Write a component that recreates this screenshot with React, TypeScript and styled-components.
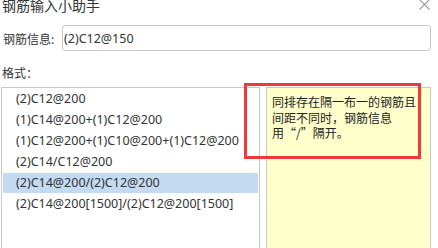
import React from "react";
import styled, { createGlobalStyle } from "styled-components";

const Global = createGlobalStyle`
  html, body {
    margin: 0;
    padding: 0;
    background: #ffffff;
    overflow: hidden;
  }
  body {
    font-family: "Noto Sans", "Noto Sans CJK SC", sans-serif;
    color: #333333;
  }
`;

const Dialog = styled.div`
  position: relative;
  width: 438px;
  height: 248px;
  overflow: hidden;
  background: #ffffff;
`;

const TitleBar = styled.div`
  display: flex;
  align-items: center;
  justify-content: space-between;
  height: 10px;
  padding: 0 8px 0 2px;
`;

const Title = styled.div`
  font-family: "Noto Sans CJK SC", sans-serif;
  font-size: 14px;
  line-height: 10px;
  color: #333333;
`;

const Close = styled.svg`
  width: 11px;
  height: 11px;
  margin-top: -2px;
`;

const FormRow = styled.div`
  display: flex;
  align-items: center;
  margin-top: 15px;
  padding: 0 7px 0 3px;
`;

const Label = styled.div`
  font-family: "Noto Sans CJK SC", sans-serif;
  font-size: 12px;
  width: 59px;
  color: #333333;
`;

const Input = styled.div`
  flex: 1;
  height: 24px;
  border: 1px solid #c8c8c8;
  border-radius: 3px;
  display: flex;
  align-items: center;
  padding-left: 1px;
  font-size: 12.5px;
  color: #333333;
`;

const SectionLabel = styled.div`
  font-family: "Noto Sans CJK SC", sans-serif;
  font-size: 12px;
  line-height: 16px;
  margin-top: 14px;
  padding-left: 2px;
  color: #333333;
`;

const Panels = styled.div`
  display: flex;
  gap: 6px;
  margin-top: 6px;
  padding: 0 7px 0 1px;
  height: 180px;
`;

const List = styled.div`
  width: 255px;
  border: 1px solid #c8c8c8;
  padding: 0 1px;
  box-sizing: content-box;
`;

const Row = styled.div<{ $selected?: boolean }>`
  height: 20px;
  margin: 1px 0;
  line-height: 20px;
  padding-left: 13px;
  font-size: 12.5px;
  white-space: nowrap;
  color: #333333;
  background: ${(p) => (p.$selected ? "#c4daf1" : "transparent")};
`;

const Note = styled.div`
  flex: 1;
  border: 1px solid #c8c8c8;
  background: #ffffcc;
  padding: 6px 5px;
  font-family: "Noto Sans CJK SC", sans-serif;
  font-size: 12px;
  line-height: 15.5px;
  color: #222222;
`;

const Highlight = styled.div`
  position: absolute;
  left: 244px;
  top: 83px;
  width: 171px;
  height: 70px;
  border: 3px solid #f03a3a;
  pointer-events: none;
`;

const rows = [
  "(2)C12@200",
  "(1)C14@200+(1)C12@200",
  "(1)C12@200+(1)C10@200+(1)C12@200",
  "(2)C14/C12@200",
  "(2)C14@200/(2)C12@200",
  "(2)C14@200[1500]/(2)C12@200[1500]",
];

export default function App() {
  return (
    <Dialog>
      <Global />
      <TitleBar>
        <Title>钢筋输入小助手</Title>
        <Close viewBox="0 0 11 11">
          <path d="M0.5 0.5 L10.5 10.5 M10.5 0.5 L0.5 10.5" stroke="#9a9a9a" strokeWidth="1.1" fill="none" />
        </Close>
      </TitleBar>
      <FormRow>
        <Label>钢筋信息:</Label>
        <Input>(2)C12@150</Input>
      </FormRow>
      <SectionLabel>格式：</SectionLabel>
      <Panels>
        <List>
          {rows.map((r, i) => (
            <Row key={r} $selected={i === 4}>
              {r}
            </Row>
          ))}
        </List>
        <Note>
          同排存在隔一布一的钢筋且
          <br />
          间距不同时，钢筋信息
          <br />
          用“/”隔开。
        </Note>
      </Panels>
      <Highlight />
    </Dialog>
  );
}
